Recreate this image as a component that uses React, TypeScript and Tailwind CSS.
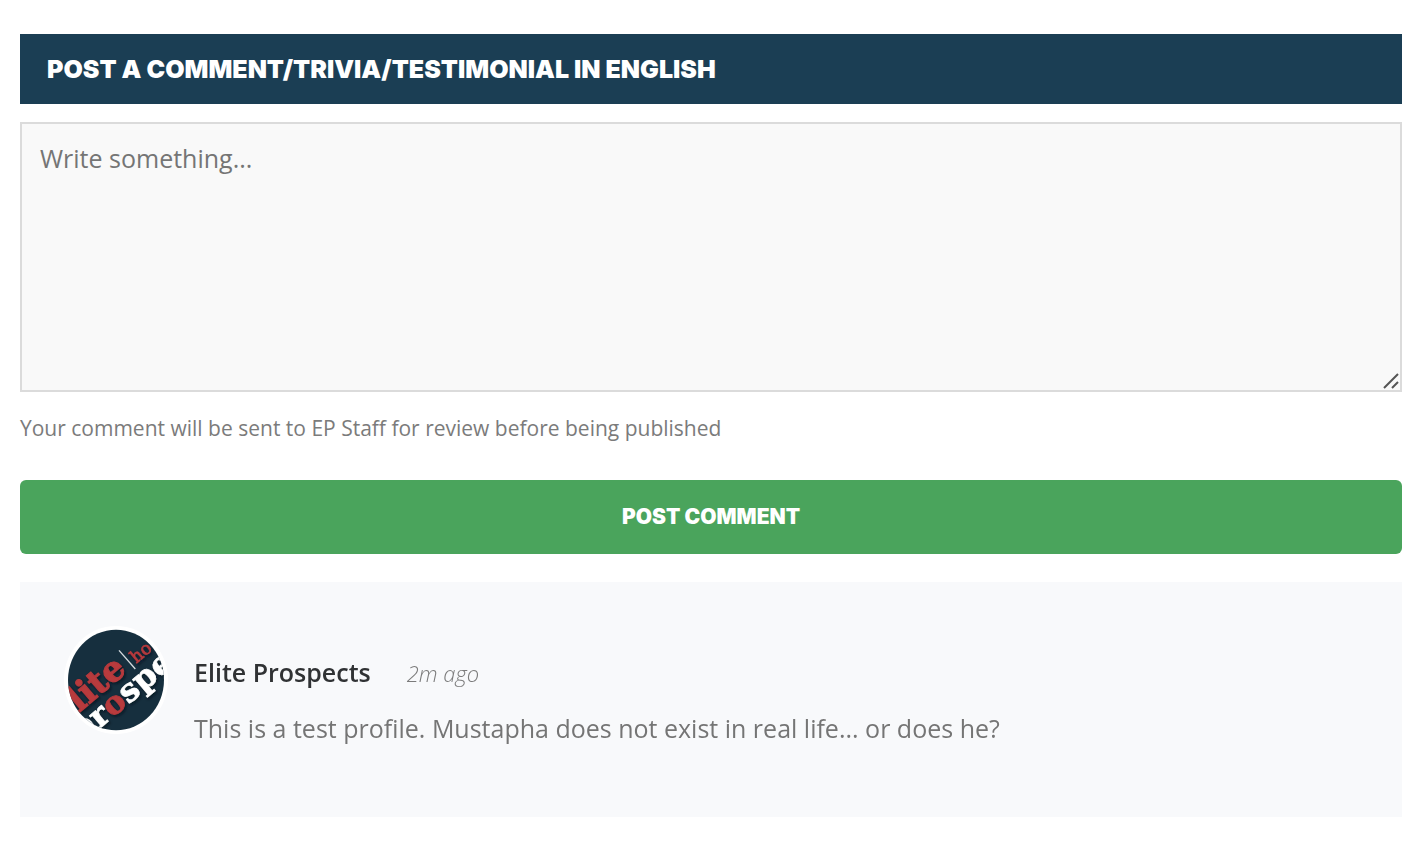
const Avatar = () => {
  return (
    <svg
      className="w-[104px] h-[108px] shrink-0"
      viewBox="42 32 312 324"
      role="img"
      aria-label="Elite Prospects"
    >
      <defs>
        <clipPath id="avatar-clip">
          <ellipse cx="198" cy="194" rx="144" ry="151" />
        </clipPath>
        <filter id="avatar-shadow">
          <feDropShadow dx="4" dy="5" stdDeviation="3" floodColor="#06131c" floodOpacity="0.7" />
        </filter>
      </defs>
      <ellipse cx="198" cy="194" rx="156" ry="162" fill="#ffffff" />
      <g clipPath="url(#avatar-clip)">
        <rect x="42" y="32" width="312" height="324" fill="#162f3e" />
        <g
          fontFamily="'DejaVu Serif', serif"
          fontWeight="700"
          filter="url(#avatar-shadow)"
        >
          <text
            transform="translate(86 293) rotate(-40)"
            fontSize="104"
            fill="#b73a3d"
            stroke="#b73a3d"
            strokeWidth="3"
          >
            lite
          </text>
          <text
            transform="translate(259 145) rotate(-40)"
            fontSize="52"
            fontWeight="400"
            fill="#b73a3d"
            stroke="#b73a3d"
            strokeWidth="2"
          >
            ho
          </text>
          <text
            transform="translate(148 341) rotate(-40)"
            fontSize="96"
            fill="#ffffff"
            stroke="#ffffff"
            strokeWidth="2"
          >
            r<tspan fill="#b73a3d" stroke="#b73a3d">o</tspan>spe
          </text>
          <path d="M58 284 L90 318 L70 334 Z" fill="#b73a3d" />
          <path d="M80 318 Q112 296 130 326 L138 350 L96 350 Z" fill="#ffffff" />
        </g>
        <path d="M207 105 L256 161" stroke="#d5dbdf" strokeWidth="4" />
      </g>
    </svg>
  );
};

const CommentForm = () => {
  return (
    <form onSubmit={(e) => e.preventDefault()}>
      <h2 className="bg-[#1b3e54] text-white text-[25px] leading-[70px] font-black uppercase px-[27px] font-[Inter,sans-serif]">
        <label htmlFor="comment">Post a comment/trivia/testimonial in English</label>
      </h2>

      <div className="relative mt-[18px]">
        <textarea
          className="block w-full h-[270px] resize-none bg-[#f9f9f9] border-2 border-[#dbdbdb] px-[18px] py-4 text-[25px] leading-9 text-[#757575] placeholder:text-[#757575] outline-none"
          id="comment"
          name="comment"
          placeholder="Write something..."
        />
        <svg
          className="absolute right-[3px] bottom-[3px] size-4 pointer-events-none"
          viewBox="0 0 16 16"
          stroke="#555555"
          strokeWidth="2"
          aria-hidden="true"
        >
          <path d="M1 15 L15 1 M9 15 L15 9" />
        </svg>
      </div>

      <p className="mt-5 text-[21px] leading-8 text-[#7b7b7b]">
        Your comment will be sent to EP Staff for review before being published
      </p>

      <button
        className="mt-9 w-full h-[74px] bg-[#4aa45c] text-white rounded-md text-[21px] font-black uppercase font-[Inter,sans-serif]"
        type="submit"
      >
        Post comment
      </button>
    </form>
  );
};

const Comment = () => {
  return (
    <article className="mt-7 flex bg-[#f8f9fb] pt-11 pb-[69px] pl-11">
      <Avatar />
      <div className="pl-[26px] pt-[26px]">
        <div className="flex items-baseline gap-9 leading-10">
          <h3 className="text-[25px] font-semibold text-[#303234]">Elite Prospects</h3>
          <time className="text-[22px] font-light italic text-[#7b7b7b]">2m ago</time>
        </div>
        <p className="mt-[15px] text-[25px] leading-10 text-[#757575]">
          This is a test profile. Mustapha does not exist in real life... or does he?
        </p>
      </div>
    </article>
  );
};

const App = () => {
  return (
    <main className="pt-[34px] pb-9 pl-5 pr-[26px] bg-white font-['Open_Sans',sans-serif]">
      <CommentForm />
      <Comment />
    </main>
  );
};

export default App;
